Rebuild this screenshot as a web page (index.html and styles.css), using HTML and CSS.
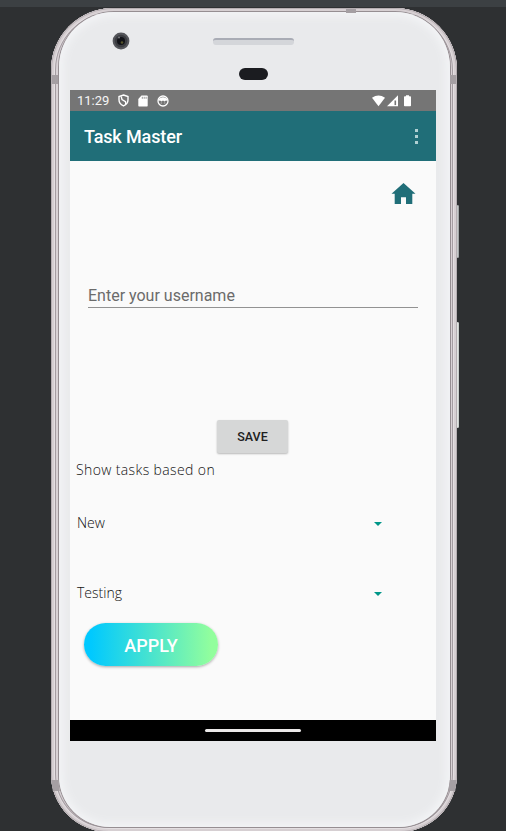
FILE: index.html
```html
<!DOCTYPE html>
<html lang="en">
<head>
<meta charset="utf-8">
<title>Task Master</title>
<link rel="stylesheet" href="styles.css">
</head>
<body>
<div class="topstrip"></div>
<div class="device">
  <i class="side-key power"></i><i class="side-key volume"></i>
  <i class="band top-right"></i><i class="band left-upper"></i><i class="band right-upper"></i>
  <i class="band left-lower"></i><i class="band right-lower"></i>
  <div class="face">
    <svg class="camera" viewBox="0 0 18 18"><circle cx="9" cy="9" r="8.4" fill="#55565b"/><circle cx="9" cy="9" r="6.3" fill="#3b3c41"/><circle cx="9" cy="9" r="4" fill="#111217"/><circle cx="10" cy="10.5" r="1.3" fill="#55542a"/><circle cx="7" cy="5.5" r="1" fill="#77787c"/></svg>
    <div class="speaker"></div>
    <div class="sensor"></div>
    <main class="screen">
      <div class="status">
        <span class="time">11:29</span>
        <svg class="shield" viewBox="0 0 11 13"><path d="M5.5 1 10 2.6v3.2c0 2.9-1.7 5-4.5 6.1C2.7 10.8 1 8.7 1 5.8V2.6z" fill="none" stroke="#fff" stroke-width="1.4"/><path d="M3.2 2.5 4 5.500l3.500 2.200.2 2.600" fill="none" stroke="#fff" stroke-width="1.3"/></svg>
        <svg class="sd" viewBox="0 0 10 12"><path d="M3.5.5H9a.7.7 0 0 1 .7.7v9.600a.7.7 0 0 1-.7.7H1a.7.7 0 0 1-.7-.7V4z" fill="#fff"/><path d="M4.300 1.800v2M6.200 1.800v2M8.100 1.800v2" stroke="#777" stroke-width=".8"/></svg>
        <svg class="face-icon" viewBox="0 0 12 12"><circle cx="6" cy="6" r="5" fill="none" stroke="#fff" stroke-width="1.3"/><path d="M1.500 6C1.500 1 10.500 1 10.500 6L9 5.500l-1.500 1L6 5.500l-1.500 1-1.500-1z" fill="#fff"/><path d="M3.800 8h1M7.200 8h1" stroke="#ccc"/></svg>
        <svg class="signals" viewBox="0 0 40 12"><path d="M0 2.800Q6.500-1.600 13 2.800L6.500 11.300z" fill="#fff"/><path d="M26 .3V11.300H15z" fill="#fff"/><path d="M23.300 5.500v4.600" stroke="#757575" stroke-width="1.6"/><path d="M34 .3h3v1h1.200q.8 0 .8.800v8.400q0 .8-.8.800h-5.400q-.8 0-.8-.8V2.100q0-.8.800-.8H34z" fill="#fff"/></svg>
      </div>
      <header class="appbar"><h1>Task Master</h1><span class="more"><i></i><i></i><i></i></span></header>
      <section class="content">
        <svg class="home" viewBox="0 0 24 21"><path d="M12 0 24 10.700H20.800V21H14.500V14.200H9.500V21H3.200V10.700H0z" fill="#206e78"/></svg>
        <div class="field">Enter your username</div>
        <div class="save">SAVE</div>
        <div class="label hand">Show tasks based on</div>
        <div class="spinner first"><span class="hand">New</span><i class="arrow"></i></div>
        <div class="spinner second"><span class="hand">Testing</span><i class="arrow"></i></div>
        <div class="apply">APPLY</div>
      </section>
      <footer class="nav"><i></i></footer>
    </main>
  </div>
</div>
</body>
</html>
```
FILE: styles.css
```css
* { box-sizing: border-box; }
html { height: 831px; overflow: hidden; }
body { margin: 0; height: 831px; overflow: hidden; background: #2e3032; font-family: Roboto, "Liberation Sans", sans-serif; }
svg { display: block; flex: none; }
.topstrip { height: 7px; background: #3c4043; }
.device {
  position: relative; width: 406px; height: 824px; margin: 1px 0 0 51px; padding: 4px 7px 4px 8px;
  border-radius: 62px 62px 58px 58px; background: #d9d3d6;
  box-shadow: inset 0 0 0 1px #b5aeb2, inset 0 0 0 3px #d6cfd2, inset 0 0 0 4px #e4dfe2, inset 0 0 0 5px #a59da2, inset 0 0 0 6px #d9d2d6;
}
.face {
  height: 815px; padding: 26px 0 0 11px; border-radius: 55px 55px 51px 51px; background: #e9eaec;
  box-shadow: 0 0 0 1px #968e92, inset 0 0 8px 4px #f3f4f6;
}
.side-key { position: absolute; z-index: -1; left: 404px; width: 4px; border-radius: 1px; background: #c5c8c9; border: 1px solid #a3a6a7; }
.power { top: 197px; height: 53px; }
.volume { top: 314px; height: 106px; background: #e1e4e2; border-color: #c9ccca; }
.band { position: absolute; background: #a59fa3; }
.top-right { left: 295px; top: 1px; width: 10px; height: 4px; }
.left-upper { left: 1px; top: 67px; width: 6px; height: 9px; }
.right-upper { left: 399px; top: 67px; width: 6px; height: 9px; }
.left-lower { left: 1px; top: 772px; width: 7px; height: 11px; transform: skewX(8deg); }
.right-lower { left: 398px; top: 772px; width: 7px; height: 11px; transform: skewX(-8deg); }
.camera { width: 18px; height: 18px; margin: -6px 0 0 42px; }
.speaker { width: 81px; height: 7px; margin: -12px 0 0 143px; border-radius: 3px; background: #d4d6da; border-top: 2px solid #a9acb5; }
.sensor { width: 29px; height: 12px; margin: 23px 0 0 169px; border-radius: 6px; background: #1b1c20; }
.screen { width: 366px; height: 651px; margin-top: 10px; background: #fafafa; display: flex; flex-direction: column; }
.status { flex: none; height: 21px; background: #757575; display: flex; align-items: center; padding-left: 7px; color: #f5f5f5; }
.time { width: 41px; font-size: 13px; line-height: 21px; }
.shield { width: 11px; height: 13px; }
.sd { width: 10px; height: 12px; margin-left: 9px; }
.face-icon { width: 12px; height: 12px; margin-left: 9px; }
.signals { width: 40px; height: 12px; margin-left: 203px; }
.appbar { flex: none; height: 50px; padding: 1px 18px 0 14px; display: flex; align-items: center; justify-content: space-between; background: #206e78; color: #fff; }
h1 { margin: 0; font-size: 18px; line-height: 24px; font-weight: 500; letter-spacing: -.13px; }
.more { display: flex; flex-direction: column; gap: 3px; }
.more i { width: 3px; height: 3px; background: #b0d0d3; }
.content { flex: 1; display: flex; flex-direction: column; align-items: flex-start; }
.home { width: 25px; height: 21px; margin: 22px 0 0 321px; }
.field { width: 330px; height: 25px; margin: 79px 0 0 18px; border-bottom: 1px solid #929292; color: #6b6b6b; font-size: 16px; line-height: 26px; }
.save { width: 71px; height: 33px; margin: 112px 0 0 147px; border-radius: 2px; background: #d6d7d7; box-shadow: 0 1px 2px #0004; color: #202020; text-align: center; font-size: 12.5px; line-height: 34px; font-weight: 500; }
.hand { font-family: "Coming Soon", "Open Sans", sans-serif; font-weight: 300; font-size: 14px; line-height: 20px; color: #111; white-space: nowrap; }
.label { margin: 7px 0 0 6px; letter-spacing: .38px; }
.spinner { display: flex; align-items: center; width: 305px; height: 20px; margin-left: 7px; justify-content: space-between; }
.first { margin-top: 33px; }
.second { margin-top: 50px; }
.arrow { border: 4px solid transparent; border-top-color: #009688; border-bottom: 0; margin-top: 2px; }
.apply { width: 134px; height: 43px; margin: 20px 0 0 14px; border-radius: 22px; background: linear-gradient(90deg, #00c9ff 5%, #92fe9d 95%); box-shadow: 0 1px 3px #0005; color: #fff; text-align: center; font-size: 18px; font-weight: 500; line-height: 45px; }
.nav { flex: none; height: 21px; background: #000; display: flex; align-items: center; justify-content: center; }
.nav i { width: 96px; height: 3px; border-radius: 2px; background: #ebe9e9; }
```
